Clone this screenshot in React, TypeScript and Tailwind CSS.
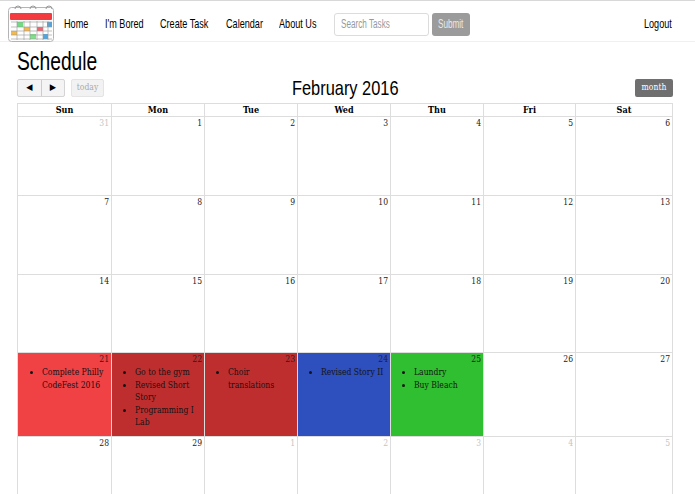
const nav: [string, string][] = [["Home", "w-[24px]"], ["I'm Bored", "w-[38px]"], ["Create Task", "w-[49px]"], ["Calendar", "w-[36px]"], ["About Us", "w-[37px]"]];
const days = ["Sun", "Mon", "Tue", "Wed", "Thu", "Fri", "Sat"];
type Cell = { n: number; off?: boolean; bg?: string; items?: string[] };
const rows: { h: string; cells: Cell[] }[] = [
  { h: "h-[79px]", cells: [{ n: 31, off: true }, { n: 1 }, { n: 2 }, { n: 3 }, { n: 4 }, { n: 5 }, { n: 6 }] },
  { h: "h-[79px]", cells: [{ n: 7 }, { n: 8 }, { n: 9 }, { n: 10 }, { n: 11 }, { n: 12 }, { n: 13 }] },
  { h: "h-[78px]", cells: [{ n: 14 }, { n: 15 }, { n: 16 }, { n: 17 }, { n: 18 }, { n: 19 }, { n: 20 }] },
  {
    h: "h-[84px]",
    cells: [
      { n: 21, bg: "bg-[#f04145]", items: ["Complete Philly CodeFest 2016"] },
      { n: 22, bg: "bg-[#bf2e2f]", items: ["Go to the gym", "Revised Short Story", "Programming I Lab"] },
      { n: 23, bg: "bg-[#bf2e2f]", items: ["Choir translations"] },
      { n: 24, bg: "bg-[#2e4fbe]", items: ["Revised Story II"] },
      { n: 25, bg: "bg-[#30bf30]", items: ["Laundry", "Buy Bleach"] },
      { n: 26 },
      { n: 27 },
    ],
  },
  { h: "h-[79px]", cells: [{ n: 28 }, { n: 29 }, { n: 1, off: true }, { n: 2, off: true }, { n: 3, off: true }, { n: 4, off: true }, { n: 5, off: true }] },
];
const widths = ["w-[93px]", "w-[93px]", "w-[93px]", "w-[93px]", "w-[93px]", "w-[92px]", "w-[97px]"];

function Logo() {
  const c: [number, number, number, number, string][] = [
    [9, 20, 6, 5, "#6fdc7f"], [39, 20, 5, 5, "#4da6e0"], [16, 25, 6, 4, "#f7b84a"], [3, 29, 6, 4, "#f7b84a"], [29, 25, 6, 4, "#ee6470"], [22, 32, 6, 5, "#7fe08a"], [35, 32, 5, 5, "#4da6e0"],
  ];
  return (
    <svg width="47" height="41" viewBox="0 0 47 41" className="shrink-0">
      <rect x="0.5" y="5.5" width="45" height="34" rx="3" fill="#fdfdfd" stroke="#b4b4b4" />
      {[10, 25, 41].map((x) => (
        <path key={x} d={`M${x - 3} 7a3 3 0 0 1 6 0`} fill="none" stroke="#999" />
      ))}
      <rect x="2" y="11" width="42" height="7" rx="1" fill="#f23a3f" />
      {c.map(([x, y, w, h, f], i) => (
        <rect key={i} x={x} y={y} width={w} height={h} fill={f} />
      ))}
      {[9, 16, 22, 29, 35, 40].map((x) => (
        <path key={x} d={`M${x} 19V38`} stroke="#999" strokeWidth="0.6" />
      ))}
      {[20, 25, 29, 33, 37].map((y) => (
        <path key={y} d={`M3 ${y}H44`} stroke="#999" strokeWidth="0.6" />
      ))}
    </svg>
  );
}

export default function App() {
  const sans = "font-['Liberation_Sans',sans-serif]";
  return (
    <div className="h-[494px] w-[695px] overflow-hidden bg-white font-['DejaVu_Serif_Condensed','DejaVu_Serif',serif] text-black">
      <header className={`flex h-[42px] items-center border-t border-b border-t-[#d8d8d8] border-b-[#f0f0f0] pt-[6px] ${sans}`}>
        <div className="ml-[8px] -mt-[3px]"><Logo /></div>
        <nav className="ml-[9px] flex gap-[17px] text-[13px]">
          {nav.map(([n, w]) => <span key={n} className={`${w} origin-left scale-x-[0.7] whitespace-nowrap`}>{n}</span>)}
        </nav>
        <div className="ml-[18px] flex h-[23px] w-[95px] items-center rounded-[3px] border border-[#dcdcdc] px-[6px] text-[12px] text-[#999]">
          <span className="origin-left scale-x-[0.68] whitespace-nowrap">Search Tasks</span>
        </div>
        <button className="ml-[3px] flex h-[23px] w-[38px] items-center justify-center rounded-[3px] bg-[#9b9b9b] text-[12px] text-[#e8e8e8]">
          <span className="scale-x-[0.68]">Submit</span>
        </button>
        <span className="ml-auto mr-[22px] w-[29px] origin-left scale-x-[0.7] whitespace-nowrap text-[13px]">Logout</span>
      </header>
      <main className="pl-[17px] pr-[22px]">
        <h1 className={`mt-[5px] h-[28px] w-[80px] origin-left scale-x-[0.77] whitespace-nowrap text-[25px] leading-[29px] ${sans}`}>Schedule</h1>
        <div className="flex h-[25px] items-center justify-between">
          <div className="flex w-[150px] items-center">
            <div className="flex h-[18px] w-[48px] rounded-[2px] border border-[#d4d4d4] bg-[#f4f4f4] text-[9px]">
              <span className="flex flex-1 items-center justify-center border-r border-[#ccc]">◀</span>
              <span className="flex flex-1 items-center justify-center">▶</span>
            </div>
            <span className="ml-[6px] flex h-[18px] w-[33px] items-center justify-center rounded-[2px] border border-[#e4e4e4] bg-[#f2f2f2] text-[8.5px] text-[#aaa]">today</span>
          </div>
          <h2 className={`w-[107px] origin-left scale-x-[0.78] whitespace-nowrap text-[21px] leading-[25px] ${sans}`}>February 2016</h2>
          <div className="flex w-[150px] justify-end">
            <span className="flex h-[18px] w-[38px] items-center justify-center rounded-[2px] bg-[#6f6f6f] text-[8.5px] text-white">month</span>
          </div>
        </div>
        <div className="mt-[3px] flex h-[14px] border border-[#ddd]">
          {days.map((d, i) => (
            <div key={d} className={`${widths[i]} ${i ? "border-l border-[#ddd]" : ""} text-center text-[9px] leading-[12px] font-bold`}>{d}</div>
          ))}
        </div>
        {rows.map((r, ri) => (
          <div key={ri} className={`flex ${r.h} border-x border-b border-[#ddd]`}>
            {r.cells.map((c, i) => (
              <div key={i} className={`${widths[i]} ${i ? "border-l border-[#ddd]" : ""} ${c.bg ?? ""} px-[1px] text-[8.5px]`}>
                <div className={`pr-[1px] text-right leading-[13px] ${c.off ? "text-[#c4c4c4]" : "text-[#222]"}`}>{c.n}</div>
                {c.items && (
                  <ul className={`list-disc ${i ? "pl-[22px]" : "pl-[23px]"} pr-[2px] text-[8.5px] leading-[12.5px] text-[#141414]`}>
                    {c.items.map((t) => <li key={t}>{t}</li>)}
                  </ul>
                )}
              </div>
            ))}
          </div>
        ))}
      </main>
    </div>
  );
}
